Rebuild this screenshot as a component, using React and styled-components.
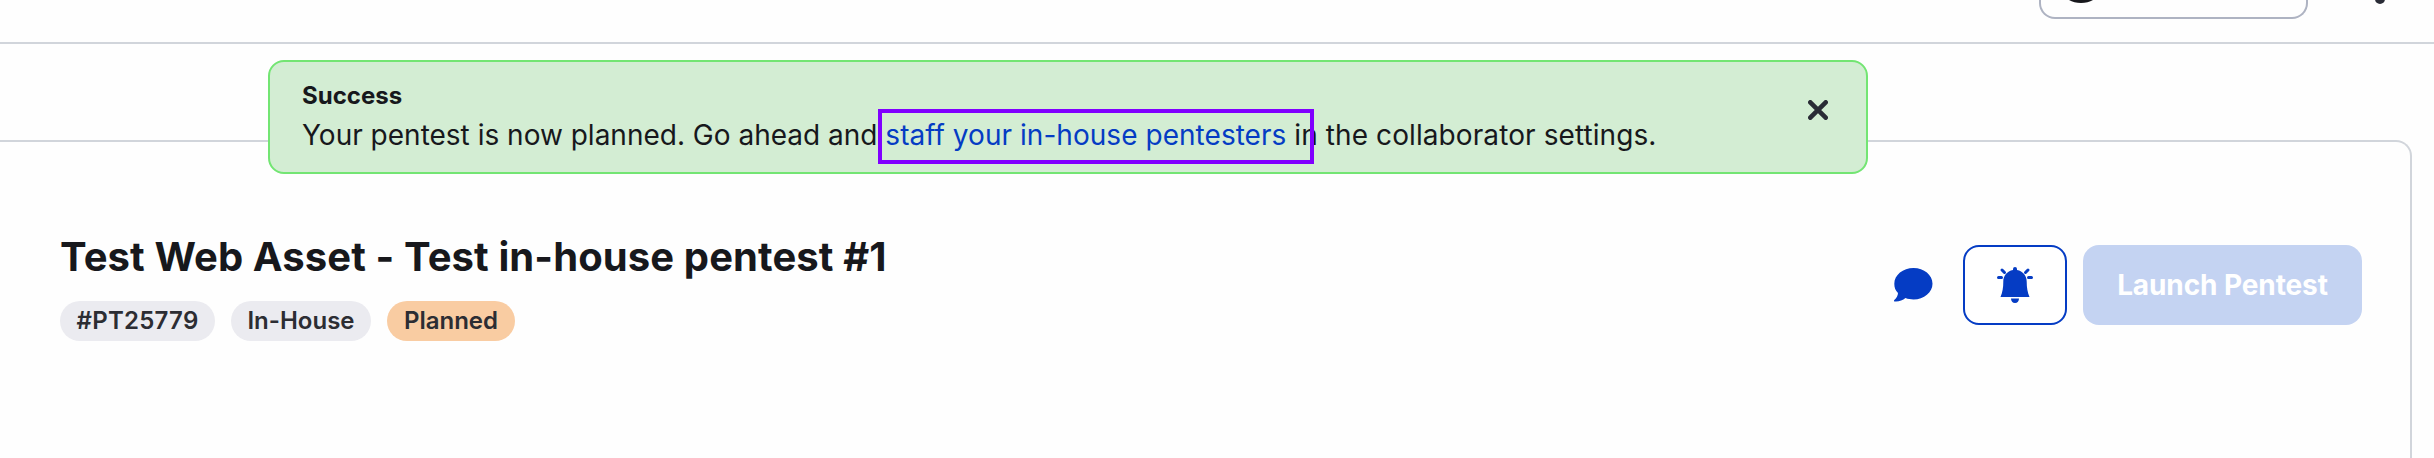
import React from "react";
import styled, { createGlobalStyle } from "styled-components";

const Global = createGlobalStyle`
  * { box-sizing: border-box; }
  html, body { margin: 0; background: #fefefe; overflow: hidden; }
  body { font-family: Inter, sans-serif; color: #17181c; }
`;

const Page = styled.div`
  position: relative;
  height: 458px;
  overflow: hidden;
  display: flex;
  flex-direction: column;
`;

const TopBar = styled.header`
  height: 44px;
  flex: none;
  display: flex;
  justify-content: flex-end;
  padding-right: 49px;
  border-bottom: 2px solid #d1d5db;
`;

const OrgSelect = styled.div`
  width: 269px;
  height: 19px;
  margin-right: 67px;
  padding-left: 27px;
  border: 2px solid #aeb3c2;
  border-top: 0;
  border-radius: 0 0 16px 16px;
`;

const TopIcon = styled.svg`
  display: block;
`;

const Card = styled.main`
  margin: 96px 22px 0 0;
  flex: 1;
  display: flex;
  justify-content: space-between;
  align-items: flex-start;
  padding: 91px 48px 0 60px;
  border: 2px solid #d1d5db;
  border-width: 2px 2px 0 0;
  border-radius: 0 16px 0 0;
`;

const Title = styled.h1`
  margin: 0;
  font-size: 40px;
  line-height: 48px;
  font-weight: 700;
  letter-spacing: 0.1px;
  white-space: nowrap;
`;

const Tags = styled.div`
  display: flex;
  gap: 16px;
  margin-top: 20px;
`;

const Tag = styled.span`
  height: 40px;
  width: ${(p) => p.$width}px;
  padding-bottom: 2px;
  display: flex;
  align-items: center;
  justify-content: center;
  border-radius: 20px;
  background: ${(p) => (p.$planned ? "#f9cca2" : "#ebebf0")};
  color: #2c2d33;
  font-size: 24px;
  font-weight: 600;
  letter-spacing: ${(p) => p.$tracking || 0}px;
  white-space: nowrap;
`;

const Actions = styled.div`
  display: flex;
  align-items: center;
  margin-top: 12px;
  height: 80px;
`;

const ChatIcon = styled.svg`
  margin-right: 30px;
`;

const BellButton = styled.button`
  width: 104px;
  height: 80px;
  margin-right: 16px;
  padding: 0;
  display: flex;
  align-items: center;
  justify-content: center;
  border: 2px solid #053cc4;
  border-radius: 16px;
  background: #fff;
`;

const LaunchButton = styled.button`
  width: 279px;
  height: 80px;
  padding: 0;
  border: 0;
  border-radius: 16px;
  background: #c4d3f2;
  color: #fff;
  font: 700 28px Inter, sans-serif;
  letter-spacing: -0.1px;
  white-space: nowrap;
`;

const Toast = styled.section`
  position: absolute;
  left: 268px;
  top: 60px;
  width: 1600px;
  height: 114px;
  display: flex;
  justify-content: space-between;
  align-items: flex-start;
  padding: 16px 38px 0 32px;
  border: 2px solid #73e573;
  border-radius: 16px;
  background: #d3edd3;
`;

const ToastTitle = styled.div`
  font-size: 24px;
  line-height: 36px;
  font-weight: 700;
`;

const ToastText = styled.div`
  font-size: 28px;
  line-height: 42px;
  white-space: nowrap;
`;

const StaffLink = styled.a`
  color: #053cc4;
  letter-spacing: 0.04px;
`;

const ToastTail = styled.span`
  letter-spacing: 0.09px;
`;

const CloseIcon = styled.svg`
  margin-top: 22px;
`;

const Highlight = styled.div`
  position: absolute;
  left: 878px;
  top: 109px;
  width: 436px;
  height: 55px;
  border: 4px solid #8000ff;
`;

export default function App() {
  return (
    <Page>
      <Global />
      <TopBar>
        <OrgSelect>
          <TopIcon width="26" height="4" viewBox="0 0 26 4">
            <ellipse cx="13" cy="-7" rx="17" ry="10" fill="#17181c" />
          </TopIcon>
        </OrgSelect>
        <TopIcon width="10" height="5" viewBox="0 0 10 5">
          <circle cx="5" cy="-1" r="5" fill="#2a2c36" />
        </TopIcon>
      </TopBar>
      <Card>
        <div>
          <Title>Test Web Asset - Test in-house pentest #1</Title>
          <Tags>
            <Tag $width={155} $tracking={0.25}>#PT25779</Tag>
            <Tag $width={140}>In-House</Tag>
            <Tag $width={128} $planned>Planned</Tag>
          </Tags>
        </div>
        <Actions>
          <ChatIcon width="40" height="36" viewBox="0 0 40 36" fill="#053cc4">
            <path d="M20.500 1C31 1 39.500 8 39.500 16.700S31 32.400 20.500 32.400C17.500 32.400 15 32 12.500 31C9.500 33.500 5.500 35 1.500 34.500C0.800 34.400 0.800 33.600 1.300 33C3.500 31 5 28.500 5 26C2.500 23.500 1.300 20.500 1.300 16.700C1.300 8 10 1 20.500 1Z" />
          </ChatIcon>
          <BellButton aria-label="Notifications">
            <svg width="38" height="38" viewBox="0 0 38 38" fill="#053cc4">
              <path d="M17 4V3a2 2 0 0 1 4 0v1C27 5 30.700 10 30.700 15.500C30.700 22 31.500 26 33.500 31H4.500C6.500 26 7.300 22 7.300 15.500C7.300 10 11 5 17 4Z" />
              <path d="M15 32.500H23C23 35 21.500 37 19 37S15 35 15 32.500Z" />
              <path d="M2.500 11.500H5.500M32.500 11.500H35.500M6 4L8.500 6.500M32 4L29.500 6.500" stroke="#053cc4" strokeWidth="3" strokeLinecap="round" />
            </svg>
          </BellButton>
          <LaunchButton>Launch Pentest</LaunchButton>
        </Actions>
      </Card>
      <Toast>
        <div>
          <ToastTitle>Success</ToastTitle>
          <ToastText>
            Your pentest is now planned. Go ahead and <StaffLink>staff your in-house pentesters</StaffLink>
            <ToastTail> in the collaborator settings.</ToastTail>
          </ToastText>
        </div>
        <CloseIcon width="20" height="20" viewBox="0 0 20 20">
          <path d="M2.300 2.300L17.700 17.700M17.700 2.300L2.300 17.700" stroke="#2a2c36" strokeWidth="4.600" strokeLinecap="round" />
        </CloseIcon>
      </Toast>
      <Highlight />
    </Page>
  );
}
